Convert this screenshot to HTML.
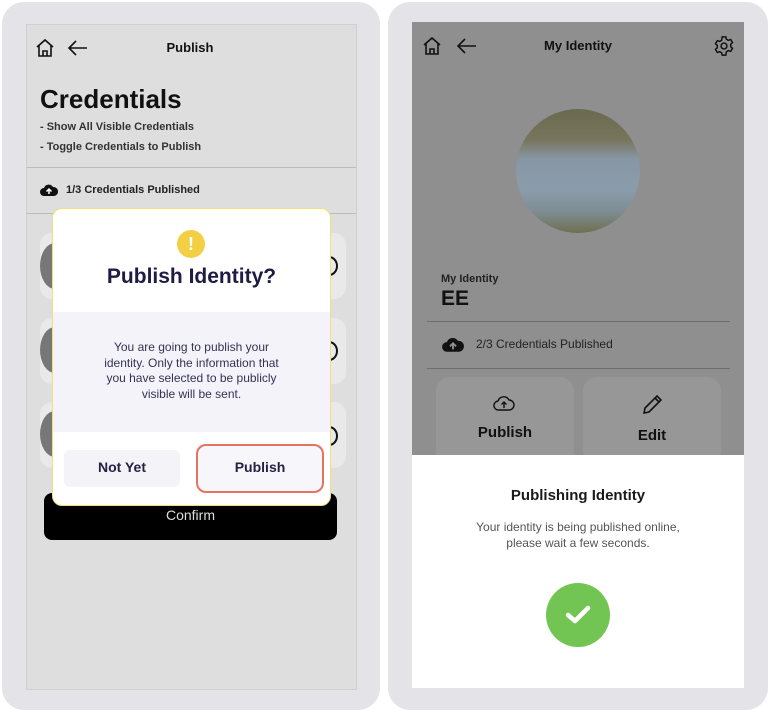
<!DOCTYPE html>
<html><head><style>
*{margin:0;padding:0;box-sizing:border-box}
body{width:770px;height:714px;background:#fff;position:relative;overflow:hidden;font-family:"Liberation Sans",sans-serif;color:#111}
.a{position:absolute}
.card{position:absolute;background:#e4e4e8;border-radius:22px}
.c{text-align:center}
</style></head><body>
<!-- left -->
<div class="card" style="left:2px;top:2px;width:378px;height:708px"></div>
<div class="a" style="left:26px;top:24px;width:331px;height:666px;background:#dedede;border:1px solid #cfcfcf"></div>
<svg class="a" style="left:34px;top:37px" width="60" height="22" viewBox="0 0 60 22" fill="none" stroke="#111" stroke-width="1.6"><path d="M3 10 L11 3 L19 10 M5 8 V19 H17 V8 M9 19 V14 H13 V19"/><path d="M53 11 H35 M42 4 L35 11 L42 18"/></svg>
<div class="a c" style="left:140px;top:40px;width:100px;font-size:13px;font-weight:bold">Publish</div>
<div class="a" style="left:40px;top:84px;font-size:26px;font-weight:bold">Credentials</div>
<div class="a" style="left:40px;top:121px;font-size:11px;font-weight:bold;color:#333">- Show All Visible Credentials</div>
<div class="a" style="left:40px;top:141px;font-size:11px;font-weight:bold;color:#333">- Toggle Credentials to Publish</div>
<div class="a" style="left:27px;top:167px;width:329px;height:1px;background:#bbb"></div>
<div class="a" style="left:27px;top:213px;width:329px;height:1px;background:#bbb"></div>
<svg class="a" style="left:40px;top:183px" width="18" height="14" viewBox="0 0 18 14"><path d="M4 13 A4 4 0 0 1 4 5 A5 5 0 0 1 13 4 A4.5 4.5 0 0 1 14 13 Z" fill="#111"/><path d="M9 11 V6 M6.5 8.5 L9 6 L11.5 8.5" stroke="#fff" stroke-width="1.5" fill="none"/></svg>
<div class="a" style="left:66px;top:184px;font-size:11px;font-weight:bold;color:#222">1/3 Credentials Published</div>
<div class="a" style="left:40px;top:233px;width:306px;height:66px;background:#e9e9e9;border-radius:12px"></div>
<div class="a" style="left:40px;top:318px;width:306px;height:66px;background:#e9e9e9;border-radius:12px"></div>
<div class="a" style="left:40px;top:402px;width:306px;height:66px;background:#e9e9e9;border-radius:12px"></div>
<div class="a" style="left:40px;top:243px;width:30px;height:46px;background:#777;border-radius:50%"></div>
<div class="a" style="left:40px;top:327px;width:30px;height:46px;background:#777;border-radius:50%"></div>
<div class="a" style="left:40px;top:411px;width:30px;height:46px;background:#777;border-radius:50%"></div>
<div class="a" style="left:320px;top:256px;width:18px;height:20px;border:2px solid #111;border-radius:50%"></div>
<div class="a" style="left:320px;top:341px;width:18px;height:20px;border:2px solid #111;border-radius:50%"></div>
<div class="a" style="left:320px;top:426px;width:18px;height:20px;border:2px solid #111;border-radius:50%"></div>
<div class="a" style="left:44px;top:493px;width:293px;height:47px;background:#000;border-radius:8px"></div>
<div class="a c" style="left:44px;top:507px;width:293px;color:#ddd;font-size:14px">Confirm</div>
<div class="a" style="left:52px;top:208px;width:279px;height:298px;background:#fff;border:1.5px solid #f2df7a;border-radius:10px;overflow:hidden">
 <div class="a" style="left:0;top:103px;width:100%;height:120px;background:#f4f3f9"></div>
</div>
<div class="a" style="left:177px;top:230px;width:28px;height:28px;border-radius:50%;background:#f3cf44;color:#fff;font-weight:bold;font-size:18px;text-align:center;line-height:28px">!</div>
<div class="a c" style="left:52px;top:265px;width:279px;font-size:21px;font-weight:bold;color:#1e1b44">Publish Identity?</div>
<div class="a c" style="left:52px;top:340px;width:279px;font-size:12px;line-height:15.5px;color:#333355">You are going to publish your<br>identity. Only the information that<br>you have selected to be publicly<br>visible will be sent.</div>
<div class="a" style="left:64px;top:450px;width:116px;height:37px;background:#f4f3f8;border-radius:6px"></div>
<div class="a c" style="left:64px;top:459px;width:116px;font-size:14px;font-weight:bold;color:#222244">Not Yet</div>
<div class="a" style="left:196px;top:444px;width:128px;height:49px;border:2px solid #e5735f;border-radius:10px;background:#f7f6fa"></div>
<div class="a c" style="left:196px;top:459px;width:128px;font-size:14px;font-weight:bold;color:#222244">Publish</div>

<!-- right -->
<div class="card" style="left:388px;top:2px;width:380px;height:708px"></div>
<div class="a" style="left:412px;top:22px;width:332px;height:433px;background:#8f8f90"></div>
<svg class="a" style="left:421px;top:35px" width="60" height="22" viewBox="0 0 60 22" fill="none" stroke="#111" stroke-width="1.6"><path d="M3 10 L11 3 L19 10 M5 8 V19 H17 V8 M9 19 V14 H13 V19"/><path d="M55 11 H37 M44 4 L37 11 L44 18"/></svg>
<div class="a c" style="left:520px;top:38px;width:116px;font-size:13px;font-weight:bold">My Identity</div>
<svg class="a" style="left:713px;top:35px" width="22" height="22" viewBox="0 0 24 24" fill="none" stroke="#111" stroke-width="1.6"><circle cx="12" cy="12" r="3.2"/><path d="M10 2h4l.6 2.6 2.2 1.2 2.5-.9 2 3.4-2 1.8v2.6l2 1.8-2 3.4-2.5-.9-2.2 1.2L14 22h-4l-.6-2.6-2.2-1.2-2.5.9-2-3.4 2-1.8v-2.6l-2-1.8 2-3.4 2.5.9 2.2-1.2z"/></svg>
<div class="a" style="left:516px;top:109px;width:124px;height:124px;border-radius:50%;background:linear-gradient(180deg,#6b6a50 0%,#77755c 25%,#8796a4 40%,#8a9cab 65%,#7f8e95 82%,#6d7050 100%)"></div>
<div class="a" style="left:441px;top:273px;font-size:11px;font-weight:bold;color:#222">My Identity</div>
<div class="a" style="left:441px;top:287px;font-size:21px;font-weight:bold;color:#111">EE</div>
<div class="a" style="left:427px;top:321px;width:303px;height:1px;background:#6e6e6e"></div>
<div class="a" style="left:427px;top:368px;width:303px;height:1px;background:#6e6e6e"></div>
<svg class="a" style="left:442px;top:336px" width="22" height="17" viewBox="0 0 18 14"><path d="M4 13 A4 4 0 0 1 4 5 A5 5 0 0 1 13 4 A4.5 4.5 0 0 1 14 13 Z" fill="#111"/><path d="M9 11 V6 M6.5 8.5 L9 6 L11.5 8.5" stroke="#8f8f90" stroke-width="1.5" fill="none"/></svg>
<div class="a" style="left:476px;top:337px;font-size:12px;color:#222">2/3 Credentials Published</div>
<div class="a" style="left:436px;top:377px;width:138px;height:90px;background:#979798;border-radius:14px"></div>
<div class="a" style="left:583px;top:377px;width:138px;height:90px;background:#979798;border-radius:14px"></div>
<svg class="a" style="left:493px;top:395px" width="22" height="18" viewBox="0 0 22 18" fill="none" stroke="#111" stroke-width="1.4"><path d="M6 15 A4.5 4.5 0 0 1 5 6 A6 6 0 0 1 16 5 A5 5 0 0 1 16 15 Z"/><path d="M11 13 V7 M8.5 9.5 L11 7 L13.5 9.5"/></svg>
<svg class="a" style="left:640px;top:393px" width="24" height="24" viewBox="0 0 24 24" fill="none" stroke="#111" stroke-width="1.6"><path d="M4 20 L5 15 L17 3 L21 7 L9 19 Z M15 5 L19 9"/></svg>
<div class="a c" style="left:436px;top:424px;width:138px;font-size:15px;font-weight:bold">Publish</div>
<div class="a c" style="left:583px;top:427px;width:138px;font-size:15px;font-weight:bold">Edit</div>
<div class="a" style="left:412px;top:455px;width:332px;height:233px;background:#fff"></div>
<div class="a c" style="left:412px;top:487px;width:332px;font-size:15px;font-weight:bold;color:#1a1a1a">Publishing Identity</div>
<div class="a c" style="left:412px;top:519px;width:332px;font-size:12px;line-height:16px;color:#555">Your identity is being published online,<br>please wait a few seconds.</div>
<div class="a" style="left:546px;top:583px;width:64px;height:64px;border-radius:50%;background:#72c552"></div>
<svg class="a" style="left:562px;top:600px" width="32" height="30" viewBox="0 0 32 30" fill="none" stroke="#fff" stroke-width="4.5" stroke-linecap="round" stroke-linejoin="round"><path d="M6 15 L13 21 L26 8"/></svg>
</body></html>
